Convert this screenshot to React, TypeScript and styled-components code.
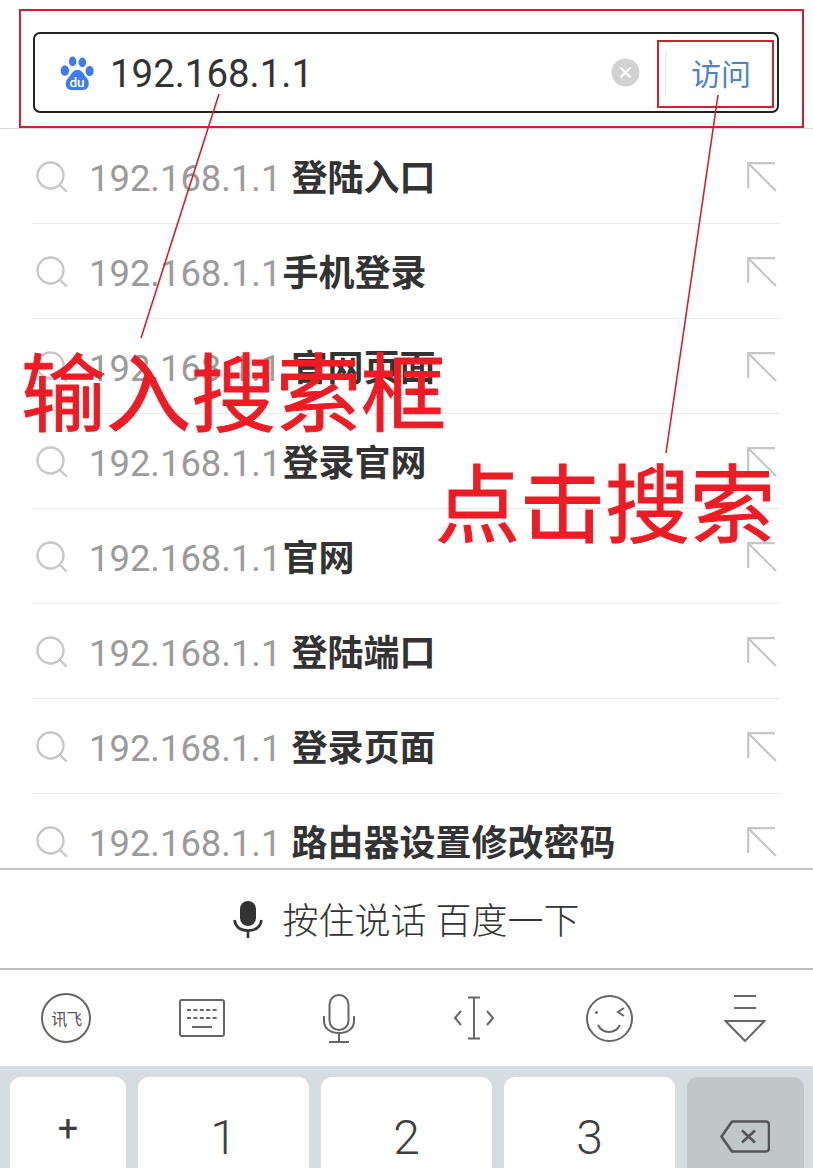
import React from "react";
import styled, { createGlobalStyle } from "styled-components";

const Global = createGlobalStyle`
  html, body { margin: 0; padding: 0; background: #fff; }
  * { box-sizing: border-box; }
`;
const CJK = `Roboto, "Noto Sans CJK SC", sans-serif`;

const Page = styled.div`
  position: relative;
  width: 813px;
  height: 1168px;
  overflow: hidden;
  background: #fff;
  font-family: ${CJK};
  display: flex;
  flex-direction: column;
`;
const Header = styled.header`
  height: 129px;
  padding: 32px 34px 16px 33px;
  border-bottom: 1px solid #dcdcdc;
  flex: none;
`;
const SearchBox = styled.div`
  height: 81px;
  border: 2px solid #222;
  border-radius: 7px;
  display: flex;
  align-items: center;
  padding: 0 0 0 25px;
`;
const Query = styled.span`
  margin: 4px 0 0 15px;
  font-size: 38.4px;
  color: #333;
  flex: 1;
  line-height: 1;
`;
const Clear = styled.span`
  width: 29px;
  height: 29px;
  flex: none;
  display: block;
  margin-right: 1px;
`;
const Divider = styled.span`
  width: 1px;
  height: 44px;
  background: #e6e6e6;
  margin-left: 24px;
`;
const Visit = styled.span`
  font-size: 30px;
  color: #4d83c9;
  margin: 4px 26px 0 25px;
  line-height: 1;
  width: 60px;
`;
const List = styled.div`
  height: 739px;
  flex: none;
  overflow: hidden;
  padding: 0 33px 0 32px;
`;
const Row = styled.div`
  height: 95px;
  padding: 6px 3px 0 0;
  border-bottom: 1px solid #e9e9e9;
  display: flex;
  align-items: center;
`;
const SearchSlot = styled.span`
  width: 57px;
  flex: none;
  display: flex;
  padding-left: 4px;
  margin-top: -4px;
`;
const Host = styled.span`
  font-size: 36.4px;
  color: #9b9b9b;
  line-height: 1;
`;
const Term = styled.strong<{ $gap: number }>`
  font-size: 36px;
  font-weight: 700;
  color: #333;
  margin-left: ${(p) => p.$gap}px;
  line-height: 1;
  flex: 1;
`;
const FillSlot = styled.span`
  display: flex;
  margin-top: -4px;
`;
const VoiceBar = styled.div`
  height: 102px;
  flex: none;
  border-top: 2px solid #c4c4c4;
  border-bottom: 2px solid #bdbdbd;
  display: flex;
  align-items: center;
  justify-content: center;
  gap: 20px;
  padding-right: 1px;
`;
const VoiceLabel = styled.span`
  font-size: 36px;
  font-weight: 300;
  color: #333;
  line-height: 1;
  margin-top: 6px;
`;
const Toolbar = styled.div`
  height: 96px;
  flex: none;
  display: grid;
  grid-template-columns: repeat(6, 1fr);
  align-items: center;
  justify-items: center;
`;
const Xunfei = styled.span`
  width: 50px;
  height: 50px;
  border: 2px solid #666;
  border-radius: 50%;
  display: flex;
  align-items: center;
  justify-content: center;
  font-size: 16px;
  letter-spacing: -1px;
  color: #555;
  margin-right: 3px;
`;
const KeyboardSlot = styled.span`
  display: flex;
  margin-right: 3px;
`;
const Keyboard = styled.div`
  flex: 1;
  background: #d6dde0;
  padding: 11px 9px 0 10px;
  display: grid;
  grid-template-columns: 116px 1fr 1fr 1fr 117px;
  gap: 12px;
  overflow: hidden;
`;
const Key = styled.div<{ $dark?: boolean; $small?: boolean }>`
  height: 110px;
  border-radius: 11px;
  background: ${(p) => (p.$dark ? "#c1c6c9" : "#fff")};
  color: #3f3f3f;
  font-size: ${(p) => (p.$small ? 36 : 48)}px;
  font-weight: ${(p) => (p.$small ? 400 : 300)};
  line-height: 1;
  display: flex;
  justify-content: center;
  padding-top: ${(p) => (p.$dark ? 43 : p.$small ? 34 : 37)}px;
`;
const Frame = styled.div<{ $x: number; $y: number; $w: number; $h: number }>`
  position: absolute;
  left: ${(p) => p.$x}px;
  top: ${(p) => p.$y}px;
  width: ${(p) => p.$w}px;
  height: ${(p) => p.$h}px;
  border: 2px solid #d3202f;
`;
const Callout = styled.div<{ $x: number; $y: number }>`
  position: absolute;
  left: ${(p) => p.$x}px;
  top: ${(p) => p.$y}px;
  font-size: 85px;
  font-weight: 400;
  -webkit-text-stroke: 1px #ed1c24;
  line-height: 1;
  color: #ed1c24;
  white-space: nowrap;
`;
const Leaders = styled.svg`
  position: absolute;
  inset: 0;
  width: 813px;
  height: 1168px;
  pointer-events: none;
`;

const Paw = () => (
  <svg width="35" height="39" viewBox="0 0 36 40" style={{ marginTop: 3 }}>
    <ellipse cx="5" cy="16" rx="4.4" ry="5.4" fill="#3e7ced" />
    <ellipse cx="13" cy="6.5" rx="3.9" ry="5" fill="#3e7ced" />
    <ellipse cx="23" cy="7.5" rx="3.9" ry="5" fill="#3e7ced" />
    <ellipse cx="30.5" cy="16.5" rx="4.2" ry="5.2" fill="#3e7ced" />
    <path d="M18 15c5 0 7 6 10 9 3 4 2 12-5 12H12C6 36 4 29 8 24c3-3 5-9 10-9z" fill="#3e7ced" />
    <text x="17.5" y="33" textAnchor="middle" fontFamily="Roboto, sans-serif" fontSize="14" fontWeight="500" fill="#fff">du</text>
  </svg>
);
const ClearIcon = () => (
  <Clear>
    <svg width="29" height="29" viewBox="0 0 29 29">
      <circle cx="14.5" cy="14.5" r="14" fill="#d2d2d2" />
      <path d="M9.5 9.5l10 10M19.5 9.5l-10 10" stroke="#fff" strokeWidth="2.2" fill="none" />
    </svg>
  </Clear>
);
const SearchIcon = () => (
  <svg width="32" height="32" viewBox="0 0 32 32" fill="none" stroke="#c8c8c8" strokeWidth="2.4">
    <circle cx="14.5" cy="14.5" r="13" />
    <path d="M24 24l6 6" strokeLinecap="round" />
  </svg>
);
const FillIcon = () => (
  <FillSlot>
    <svg width="30" height="30" viewBox="0 0 30 30" fill="none" stroke="#c6c6c6" strokeWidth="2.2">
      <path d="M28 1.2H1.2V26" />
      <path d="M1.6 1.6L29 29" />
    </svg>
  </FillSlot>
);
const VoiceMic = () => (
  <svg width="30" height="38" viewBox="0 0 30 38" style={{ marginTop: 2 }}>
    <rect x="7" y="0" width="16" height="25" rx="8" fill="#333" />
    <path d="M1.5 19c1 7 6 10.500 13.500 10.500S27.500 26 28.500 19" stroke="#333" strokeWidth="2.600" fill="none" />
    <path d="M15 29v8" stroke="#333" strokeWidth="2.600" />
  </svg>
);
const KeyboardIcon = () => (
  <KeyboardSlot>
    <svg width="46" height="38" viewBox="0 0 46 38" fill="none" stroke="#666" strokeWidth="2">
      <rect x="1" y="1" width="44" height="36" rx="2" />
      <path d="M8 11h30M8 19h30" strokeDasharray="4 2.400" strokeWidth="2" />
      <path d="M13 28h20" strokeWidth="2" />
    </svg>
  </KeyboardSlot>
);
const MicIcon = () => (
  <svg width="32" height="49" viewBox="0 0 32 49" fill="none" stroke="#666" strokeWidth="2">
    <rect x="6.500" y="1" width="19" height="35" rx="9.500" />
    <path d="M1 22v5c0 8 7 12 15 12s15-4 15-12v-5" />
    <path d="M16 39v9M6 48h20" />
  </svg>
);
const CursorIcon = () => (
  <svg width="42" height="44" viewBox="0 0 42 44" fill="none" stroke="#666" strokeWidth="2">
    <path d="M15 1.500h12M15 42.500h12M21 1.500v41" />
    <path d="M8 15l-6 7 6 7M34 15l6 7-6 7" />
  </svg>
);
const SmileIcon = () => (
  <svg width="47" height="47" viewBox="0 0 47 47" fill="none" stroke="#666" strokeWidth="2">
    <circle cx="23.500" cy="23.500" r="22.500" />
    <circle cx="10.500" cy="17.500" r="1.400" fill="#666" stroke="none" />
    <path d="M38 13l-6 4 6 4" />
    <path d="M12 30c3 6 8 7 11 7s8-1 11-7" />
  </svg>
);
const HideIcon = () => (
  <svg width="42" height="47" viewBox="0 0 42 47" fill="none" stroke="#666" strokeWidth="2">
    <path d="M10 1h22M10 13h22" />
    <path d="M1.500 26h39L21 46z" />
  </svg>
);
const BackspaceIcon = () => (
  <svg width="50" height="33" viewBox="0 0 50 33" fill="none" stroke="#555" strokeWidth="2.600" style={{ marginRight: 2 }}>
    <path d="M12 1.500h34a3 3 0 0 1 3 3v24a3 3 0 0 1-3 3H12L1.500 16.500z" strokeLinejoin="round" />
    <path d="M22 10.500l13 12M35 10.500l-13 12" />
  </svg>
);

const rows: { term: string; gap: number }[] = [
  { term: "登陆入口", gap: 10 },
  { term: "手机登录", gap: 1 },
  { term: "官网页面", gap: 10 },
  { term: "登录官网", gap: 1 },
  { term: "官网", gap: 1 },
  { term: "登陆端口", gap: 10 },
  { term: "登录页面", gap: 10 },
  { term: "路由器设置修改密码", gap: 10 },
];

export default function App() {
  return (
    <Page>
      <Global />
      <Header>
        <SearchBox>
          <Paw />
          <Query>192.168.1.1</Query>
          <ClearIcon />
          <Divider />
          <Visit>访问</Visit>
        </SearchBox>
      </Header>
      <List>
        {rows.map((r) => (
          <Row key={r.term}>
            <SearchSlot>
              <SearchIcon />
            </SearchSlot>
            <Host>192.168.1.1</Host>
            <Term $gap={r.gap}>{r.term}</Term>
            <FillIcon />
          </Row>
        ))}
      </List>
      <VoiceBar>
        <VoiceMic />
        <VoiceLabel>按住说话 百度一下</VoiceLabel>
      </VoiceBar>
      <Toolbar>
        <Xunfei>讯飞</Xunfei>
        <KeyboardIcon />
        <MicIcon />
        <CursorIcon />
        <SmileIcon />
        <HideIcon />
      </Toolbar>
      <Keyboard>
        <Key $small>+</Key>
        <Key>1</Key>
        <Key>2</Key>
        <Key>3</Key>
        <Key $dark>
          <BackspaceIcon />
        </Key>
      </Keyboard>

      <Frame $x={19} $y={9} $w={785} $h={119} />
      <Frame $x={657} $y={40} $w={117} $h={68} />
      <Leaders viewBox="0 0 813 1168">
        <path d="M219 94L141 338M718 95L666 453" stroke="#d3202f" strokeWidth="1.600" fill="none" />
      </Leaders>
      <Callout $x={21} $y={354}>输入搜索框</Callout>
      <Callout $x={435} $y={465}>点击搜索</Callout>
    </Page>
  );
}
